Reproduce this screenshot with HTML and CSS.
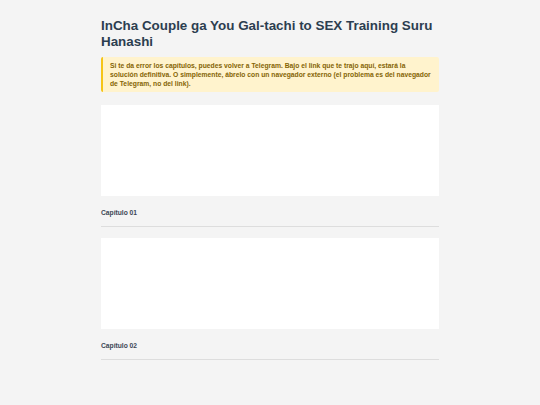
FILE: index.html
```html
<!DOCTYPE html>
<html lang="es">
<head>
<meta charset="utf-8">
<title>InCha Couple ga You Gal-tachi to SEX Training Suru Hanashi</title>
<link rel="stylesheet" href="styles.css">
</head>
<body>
<main class="page">
  <h1 class="title">InCha Couple ga You Gal-tachi to SEX Training Suru Hanashi</h1>
  <div class="notice">
    Si te da error los capítulos, puedes volver a Telegram. Bajo el link que te trajo aquí, estará la solución definitiva. O simplemente, ábrelo con un navegador externo (el problema es del navegador de Telegram, no del link).
  </div>
  <section class="chapter">
    <div class="chapter-frame"></div>
    <h2 class="chapter-name">Capítulo 01</h2>
  </section>
  <section class="chapter">
    <div class="chapter-frame"></div>
    <h2 class="chapter-name">Capítulo 02</h2>
  </section>
</main>
</body>
</html>
```
FILE: styles.css
```css
html, body {
  margin: 0;
  padding: 0;
  background: #f4f4f4;
}

body {
  font-family: "Liberation Sans", Arial, Helvetica, sans-serif;
  color: #2c3e50;
}

.page {
  width: 338px;
  margin: 0 auto;
  padding-top: 18px;
}

.title {
  margin: 0 0 7px;
  font-size: 13.4px;
  line-height: 16px;
  font-weight: bold;
  color: #2c3e50;
}

.notice {
  background: #fff3cd;
  border-left: 2px solid #f5c518;
  border-radius: 2px;
  padding: 4px 7px;
  font-size: 6.75px;
  line-height: 9px;
  font-weight: bold;
  color: #856404;
  margin-bottom: 13px;
}

.chapter {
  border-bottom: 1px solid #dddddd;
  margin-bottom: 11px;
}

.chapter-frame {
  height: 91px;
  background: #ffffff;
}

.chapter-name {
  margin: 12px 0 0;
  padding-bottom: 9px;
  font-size: 6.7px;
  line-height: 9px;
  font-weight: bold;
  color: #3b4754;
}
```
